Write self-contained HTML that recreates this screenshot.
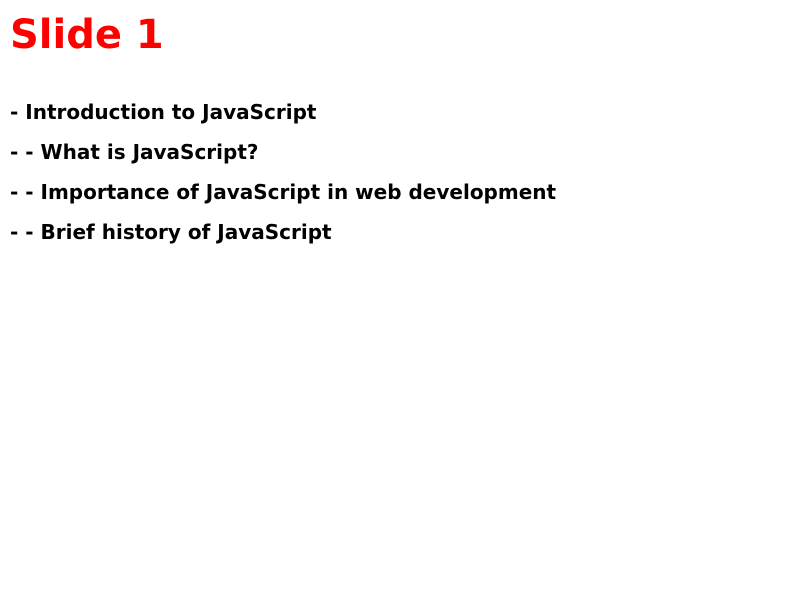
<!DOCTYPE html>
<html>
<head>
<meta charset="utf-8">
<style>
  html, body { margin: 0; padding: 0; background: #fff; width: 800px; height: 600px; overflow: hidden; }
  body { font-family: "DejaVu Sans", "Liberation Sans", sans-serif; font-weight: bold; }
  .title { position: absolute; left: 10px; top: 11px; font-size: 40px; line-height: 48px; color: #ff0000; margin: 0; }
  .item { position: absolute; left: 10px; font-size: 20px; line-height: 40px; color: #000; }
</style>
</head>
<body>
  <div class="title">Slide 1</div>
  <div class="item" style="top:92px">- Introduction to JavaScript</div>
  <div class="item" style="top:132px">- - What is JavaScript?</div>
  <div class="item" style="top:172px">- - Importance of JavaScript in web development</div>
  <div class="item" style="top:212px">- - Brief history of JavaScript</div>
</body>
</html>
